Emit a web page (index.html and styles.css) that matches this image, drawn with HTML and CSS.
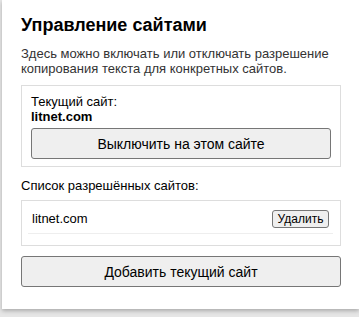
FILE: index.html
```html
<!DOCTYPE html>
<html lang="ru">
<head>
<meta charset="utf-8">
<link rel="stylesheet" href="styles.css">
</head>
<body>
<div class="popup">
  <h1 class="title">Управление сайтами</h1>
  <p class="desc">Здесь можно включать или отключать разрешение копирования текста для конкретных сайтов.</p>
  <div class="box current">
    <div class="label">Текущий сайт:</div>
    <div class="site">litnet.com</div>
    <button class="btn big">Выключить на этом сайте</button>
  </div>
  <div class="list-label">Список разрешённых сайтов:</div>
  <div class="box list">
    <div class="row">
      <span class="row-site">litnet.com</span>
      <button class="btn small">Удалить</button>
    </div>
  </div>
  <button class="btn big add">Добавить текущий сайт</button>
</div>
</body>
</html>
```
FILE: styles.css
```css
html, body {
  margin: 0;
  padding: 0;
}
body {
  background: #e6e6e6;
  width: 359px;
  height: 317px;
  overflow: hidden;
  font-family: "Liberation Sans", Arial, sans-serif;
  color: #000;
}
.popup {
  margin-left: 2px;
  width: 357px;
  height: 309px;
  box-sizing: border-box;
  background: #fff;
  padding: 13px 18px 0 19px;
  box-shadow: 0 2px 4px rgba(0,0,0,0.25);
}
.title {
  margin: 0;
  font-size: 18px;
  font-weight: bold;
  line-height: 24px;
}
.desc {
  margin: 9px 0 0 0;
  font-size: 13px;
  line-height: 15px;
  color: #333;
}
.box {
  border: 1px solid #ddd;
  box-sizing: border-box;
}
.current {
  margin-top: 9px;
  padding: 8px 9px 8px 9px;
  height: 82px;
}
.label {
  font-size: 13px;
  line-height: 15px;
}
.site {
  font-size: 13px;
  font-weight: bold;
  line-height: 15px;
}
.btn {
  font-family: "Liberation Sans", Arial, sans-serif;
  background: #efefef;
  border: 1px solid #767676;
  border-radius: 3px;
  color: #000;
  padding: 0;
  display: block;
}
.btn.big {
  width: 100%;
  height: 31px;
  font-size: 14px;
}
.current .btn.big {
  margin-top: 4px;
}
.list-label {
  margin-top: 11px;
  font-size: 13px;
  line-height: 16px;
}
.list {
  margin-top: 6px;
  height: 46px;
  padding: 3px 7px 0 6px;
}
.row {
  display: flex;
  align-items: center;
  justify-content: space-between;
  height: 29px;
  border-bottom: 1px solid #eee;
  padding: 0 4px 0 4px;
}
.row-site {
  font-size: 13px;
}
.btn.small {
  font-size: 12px;
  height: 18px;
  width: 57px;
}
.add {
  margin-top: 10px;
}
```
